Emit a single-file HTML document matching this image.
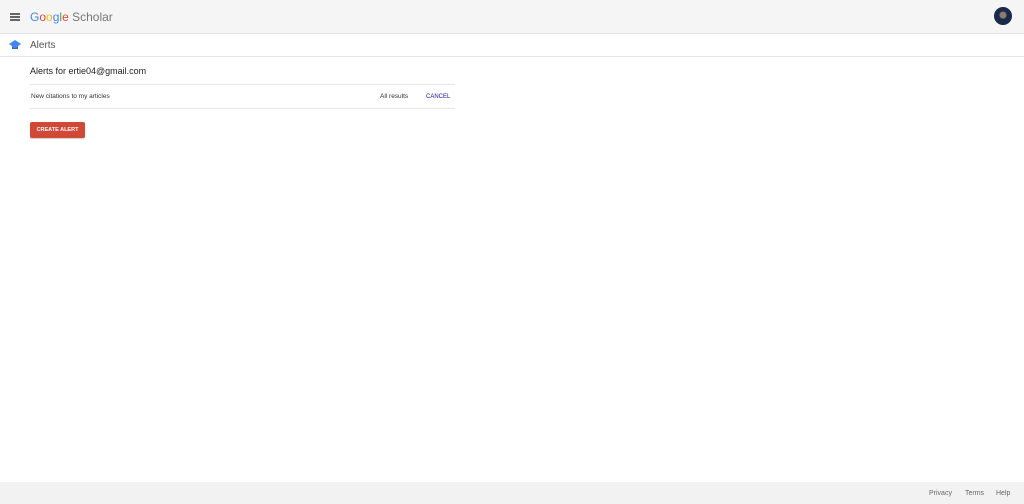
<!DOCTYPE html>
<html><head><style>
*{margin:0;padding:0;box-sizing:border-box}
body{width:1024px;height:504px;position:relative;background:#fff;font-family:"Liberation Sans",Arial,sans-serif;overflow:hidden;color:#222}
.top{position:absolute;left:0;top:0;width:1024px;height:34px;background:#f5f5f5;border-bottom:1px solid #e5e5e5}
.ham{position:absolute;left:10px;top:13px;width:10px;height:1.5px;background:#666;box-shadow:0 3px 0 #666,0 6px 0 #666}
.logo{position:absolute;left:30px;top:10px;font-size:12px;color:#777}
.sub{position:absolute;left:0;top:34px;width:1024px;height:23px;border-bottom:1px solid #e5e5e5}
.av{position:absolute;left:994px;top:7px;width:18px;height:18px;border-radius:50%;background:radial-gradient(circle at 50% 45%,#8a7a70 0 3px,#1a2a4a 4px)}
.foot{position:absolute;left:0;top:482px;width:1024px;height:22px;background:#f2f2f2;font-size:7px;color:#666}
.foot span{position:absolute;top:8px}
</style></head><body>
<div class="top"><div class="ham"></div>
<div class="logo"><span style="color:#4285f4">G</span><span style="color:#ea4335">o</span><span style="color:#fbbc05">o</span><span style="color:#4285f4">g</span><span style="color:#34a853">l</span><span style="color:#ea4335">e</span> Scholar</div>
<div class="av"></div></div>
<div class="sub">
<svg style="position:absolute;left:9px;top:6px" width="12" height="10" viewBox="0 0 12 10"><path d="M6 0L12 4L6 8L0 4Z" fill="#4285f4"/><path d="M3 6L6 8L9 6V9H3Z" fill="#356ac3"/></svg>
<span style="position:absolute;left:30px;top:6px;font-size:10px;color:#555">Alerts</span></div>
<div style="position:absolute;left:30px;top:66px;font-size:9px;color:#222">Alerts for ertie04@gmail.com</div>
<div style="position:absolute;left:30px;top:84px;width:425px;height:25px;border-top:1px solid #e5e5e5;border-bottom:1px solid #e5e5e5;font-size:6.5px">
<span style="position:absolute;left:1px;top:8px;color:#333">New citations to my articles</span>
<span style="position:absolute;left:350px;top:8px;color:#333">All results</span>
<span style="position:absolute;left:396px;top:9px;color:#1a0dab;font-size:6px">CANCEL</span></div>
<div style="position:absolute;left:30px;top:122px;width:55px;height:16px;background:#d14836;border-radius:2px;color:#fff;font-size:5.5px;font-weight:bold;text-align:center;line-height:16px;box-shadow:0 1px 1px rgba(0,0,0,.2)">CREATE ALERT</div>
<div class="foot"><span style="left:929px">Privacy</span><span style="left:965px">Terms</span><span style="left:996px">Help</span></div>
</body></html>
